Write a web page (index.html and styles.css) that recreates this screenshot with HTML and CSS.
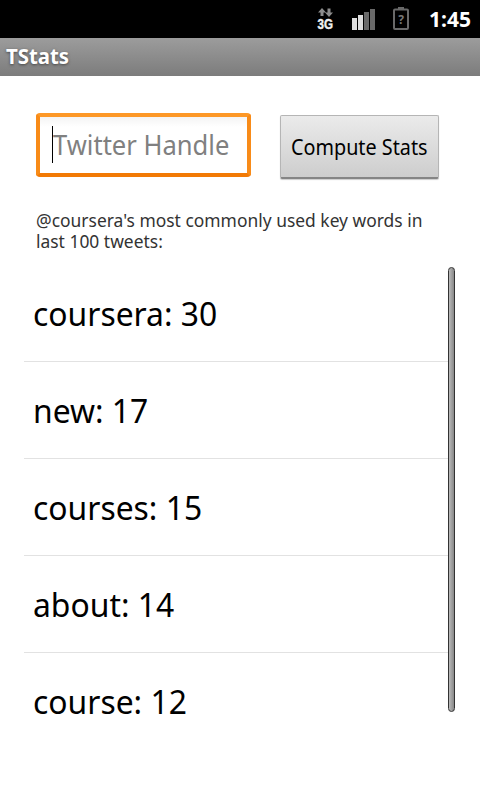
FILE: index.html
```html
<!DOCTYPE html>
<html lang="en">
<head>
<meta charset="utf-8">
<title>TStats</title>
<link rel="stylesheet" href="styles.css">
</head>
<body>
<header class="status">
  <svg class="network" width="20" height="30" viewBox="0 0 20 30">
    <path d="M6 4l4 4.500H7.500V12h-3V8.500H2zM13 13l-4-4.500h2.500V4.500h3V8.500H17z" fill="#8c8c8c"/>
    <text x="1.500" y="25" textLength="15.500" lengthAdjust="spacingAndGlyphs">3G</text>
  </svg>
  <svg class="signal" width="24" height="22" viewBox="0 0 24 22">
    <path d="M0 10h5v12H0zM6 7h5v15H6z" fill="#dedede"/>
    <path d="M12 4h5v18h-5zM18 1h5v21h-5z" fill="#696969"/>
  </svg>
  <svg class="battery" width="16" height="23" viewBox="0 0 16 23">
    <path d="M5 0h6v2H5z" fill="#696969"/>
    <rect x="1" y="2.500" width="14" height="19.500" rx="1" fill="none" stroke="#696969" stroke-width="2"/>
    <text x="8" y="16.500" text-anchor="middle">?</text>
  </svg>
  <span class="clock">1:45</span>
</header>
<div class="titlebar"><span>TStats</span></div>
<main>
  <div class="form">
    <div class="field"><i class="caret"></i><span class="hint">Twitter Handle</span></div>
    <button class="compute"><span>Compute Stats</span></button>
  </div>
  <p class="caption"><span>@coursera's most commonly used key words in</span><span>last 100 tweets:</span></p>
  <div class="results">
    <ul>
      <li><span>coursera: 30</span></li>
      <li><span>new: 17</span></li>
      <li><span>courses: 15</span></li>
      <li><span>about: 14</span></li>
      <li><span>course: 12</span></li>
    </ul>
    <div class="scrollbar"></div>
  </div>
</main>
</body>
</html>
```

FILE: styles.css
```css
* { box-sizing: border-box; }
body {
  margin: 0;
  width: 480px;
  height: 800px;
  overflow: hidden;
  background: #fff;
  font-family: "Noto Sans", "Open Sans", sans-serif;
  color: #000;
}
span { display: inline-block; transform-origin: 0 50%; white-space: nowrap; }
.status { display: flex; height: 38px; background: #000; }
.network { margin: 4px 0 0 316px; }
.network text { font: bold 14px "Liberation Sans", sans-serif; fill: #f0f0f0; stroke: #f0f0f0; stroke-width: .4px; }
.signal { margin: 8px 0 0 16px; }
.battery { margin: 7px 0 0 17px; }
.battery text { font: bold 12px "Noto Sans", sans-serif; fill: #777; }
.clock { margin-left: 20px; color: #fff; font-size: 21px; font-weight: 700; line-height: 38px; }
.titlebar {
  height: 38px;
  padding-left: 6px;
  background: linear-gradient(#9c9c9c, #7c7c7c);
  color: #fff;
  font-size: 21px;
  font-weight: 700;
  line-height: 37px;
  text-shadow: 0 1px 3px #444;
}
.titlebar span { transform: scaleX(.97); }
main { padding: 37px 24px 0; }
.form { display: flex; padding-left: 12px; }
.field {
  display: flex;
  width: 215px;
  height: 64px;
  padding: 9px 0 0 12px;
  border: 4px solid;
  border-color: #fd9827 #f88b18 #f27a05;
  border-radius: 4px;
  background: linear-gradient(#f4f4f4, #fff 10px);
}
.caret { width: 1px; height: 37px; background: #000; }
.hint { color: #808080; font-size: 27px; line-height: 38px; transform: scaleX(.947); }
.compute {
  display: flex;
  width: 159px;
  height: 64px;
  margin: 2px 0 0 29px;
  padding: 0 0 0 10px;
  align-items: center;
  border: 1px solid #b5b5b5;
  border-bottom: 2px solid #858585;
  border-radius: 2px;
  background: linear-gradient(#ebebeb, #cdcdcd);
  box-shadow: 0 1px 1px #ccc;
  color: #000;
  font: 21.500px "Noto Sans", sans-serif;
}
.compute span { transform: scaleX(.92); }
.caption { margin: 31px 0 0 12px; height: 45px; color: #333; font-size: 18px; line-height: 21px; }
.caption span { display: block; width: 400px; transform: scaleX(.968); }
.results { display: flex; height: 485px; margin-top: 10px; }
ul { width: 424px; margin: 0; padding: 0; list-style: none; }
li { height: 97px; padding-left: 9px; border-bottom: 1px solid #e2e2e2; font-size: 33px; line-height: 98px; }
li:last-child { border-bottom: 0; }
li span { transform: scaleX(.965); }
.scrollbar {
  width: 7px;
  height: 445px;
  margin-top: 2px;
  border: 1px solid #333;
  border-radius: 4px;
  background: linear-gradient(90deg, #bbb, #888);
}
```
